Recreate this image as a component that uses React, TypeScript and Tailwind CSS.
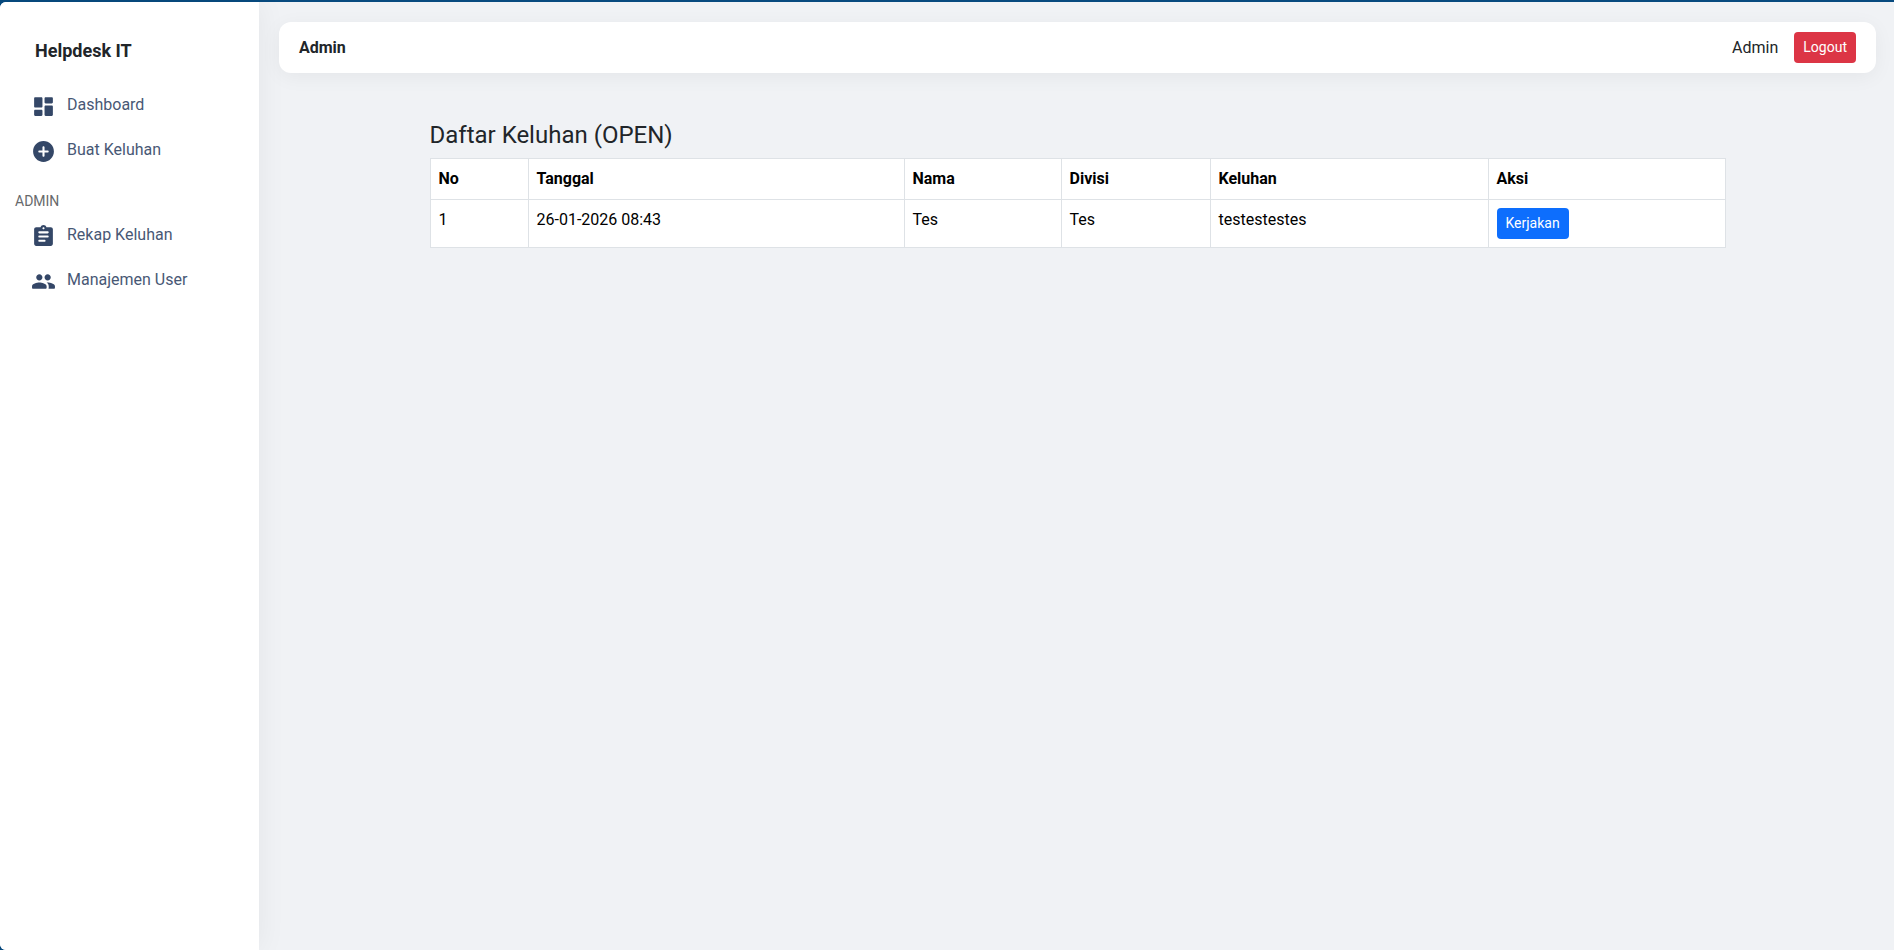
import React from 'react';

const icons = {
  dashboard:
    'M4 13h6c.55 0 1-.45 1-1V4c0-.55-.45-1-1-1H4c-.55 0-1 .45-1 1v8c0 .55.45 1 1 1zm0 8h6c.55 0 1-.45 1-1v-4c0-.55-.45-1-1-1H4c-.55 0-1 .45-1 1v4c0 .55.45 1 1 1zm10 0h6c.55 0 1-.45 1-1v-8c0-.55-.45-1-1-1h-6c-.55 0-1 .45-1 1v8c0 .55.45 1 1 1zM13 4v4c0 .55.45 1 1 1h6c.55 0 1-.45 1-1V4c0-.55-.45-1-1-1h-6c-.55 0-1 .45-1 1z',
  add:
    'M12 2C6.48 2 2 6.48 2 12s4.48 10 10 10 10-4.48 10-10S17.52 2 12 2zm4 11h-3v3c0 .55-.45 1-1 1s-1-.45-1-1v-3H8c-.55 0-1-.45-1-1s.45-1 1-1h3V8c0-.55.45-1 1-1s1 .45 1 1v3h3c.55 0 1 .45 1 1s-.45 1-1 1z',
  assignment:
    'M19 3h-4.18C14.4 1.84 13.3 1 12 1s-2.4.84-2.82 2H5c-1.1 0-2 .9-2 2v14c0 1.1.9 2 2 2h14c1.1 0 2-.9 2-2V5c0-1.1-.9-2-2-2zm-7 0c.55 0 1 .45 1 1s-.45 1-1 1-1-.45-1-1 .45-1 1-1zm1 14H8c-.55 0-1-.45-1-1s.45-1 1-1h5c.55 0 1 .45 1 1s-.45 1-1 1zm3-4H8c-.55 0-1-.45-1-1s.45-1 1-1h8c.55 0 1 .45 1 1s-.45 1-1 1zm0-4H8c-.55 0-1-.45-1-1s.45-1 1-1h8c.55 0 1 .45 1 1s-.45 1-1 1z',
  people:
    'M16 11c1.66 0 2.99-1.34 2.99-3S17.66 5 16 5s-3 1.34-3 3 1.34 3 3 3zm-8 0c1.66 0 2.99-1.34 2.99-3S9.66 5 8 5 5 6.34 5 8s1.34 3 3 3zm0 2c-2.33 0-7 1.17-7 3.5V18c0 .55.45 1 1 1h12c.55 0 1-.45 1-1v-1.5c0-2.33-4.67-3.5-7-3.5zm8 0c-.29 0-.62.02-.97.05 1.16.84 1.97 1.97 1.97 3.45V18c0 .35-.07.69-.18 1H22c.55 0 1-.45 1-1v-1.5c0-2.33-4.67-3.5-7-3.5z',
};

const NavItem = ({ icon, label }: { icon: keyof typeof icons; label: string }) => (
  <a href="#" className="flex items-center gap-[11px] h-[45px] px-[31px] text-[#344767]">
    <svg viewBox="0 0 24 24" fill="currentColor" className="size-[25px] shrink-0 mt-[3px]">
      <path d={icons[icon]} />
    </svg>
    <span className="opacity-90">{label}</span>
  </a>
);

const Sidebar = () => (
  <aside className="w-[259px] shrink-0 bg-white rounded-l-md shadow-[0_0_30px_rgba(0,0,0,0.06)]">
    <h1 className="px-[35px] pt-[37px] mb-[19px] text-lg leading-6 font-bold">Helpdesk IT</h1>
    <nav>
      <NavItem icon="dashboard" label="Dashboard" />
      <NavItem icon="add" label="Buat Keluhan" />
      <h2 className="px-[15px] pt-[18px] text-sm leading-[22px] text-[#67696c]">ADMIN</h2>
      <NavItem icon="assignment" label="Rekap Keluhan" />
      <NavItem icon="people" label="Manajemen User" />
    </nav>
  </aside>
);

const Header = () => (
  <header className="flex items-center justify-between px-5 py-[10px] bg-white rounded-xl shadow-[0_4px_20px_rgba(0,0,0,0.05)]">
    <strong className="font-bold">Admin</strong>
    <div className="flex items-center gap-4">
      <span>Admin</span>
      <button className="h-[31px] px-[9px] pb-[2px] rounded bg-[#dc3545] text-sm text-white">Logout</button>
    </div>
  </header>
);

const columns = [
  { label: 'No', width: 'w-[98px]' },
  { label: 'Tanggal', width: 'w-[376px]' },
  { label: 'Nama', width: 'w-[157px]' },
  { label: 'Divisi', width: 'w-[149px]' },
  { label: 'Keluhan', width: 'w-[278px]' },
  { label: 'Aksi', width: '' },
];

const complaints = [
  { tanggal: '26-01-2026 08:43', nama: 'Tes', divisi: 'Tes', keluhan: 'testestestes' },
];

const ComplaintTable = () => (
  <table className="w-full table-fixed border-collapse bg-white text-black text-left [&_td]:border [&_td]:border-[#dee2e6] [&_td]:p-2 [&_td]:align-top [&_th]:border [&_th]:border-[#dee2e6] [&_th]:p-2">
    <thead>
      <tr>
        {columns.map((col) => (
          <th key={col.label} className={col.width}>{col.label}</th>
        ))}
      </tr>
    </thead>
    <tbody>
      {complaints.map((row, index) => (
        <tr key={index}>
          <td>{index + 1}</td>
          <td>{row.tanggal}</td>
          <td>{row.nama}</td>
          <td>{row.divisi}</td>
          <td>{row.keluhan}</td>
          <td>
            <button className="block h-[31px] px-[9px] pb-[2px] rounded bg-[#0d6efd] text-sm text-white">Kerjakan</button>
          </td>
        </tr>
      ))}
    </tbody>
  </table>
);

const App = () => (
  <div className="min-h-screen flex bg-[#074a7f] pt-[2px] font-[Roboto,sans-serif] text-base text-[#212529]">
    <div className="flex flex-1 rounded-l-md bg-[#f0f2f5]">
      <Sidebar />
      <main className="flex-1 pl-5 pr-[18px] pt-5">
        <Header />
        <section className="max-w-[1320px] mx-auto px-3 pt-12">
          <h2 className="mb-2 text-2xl leading-[29px]">Daftar Keluhan (OPEN)</h2>
          <ComplaintTable />
        </section>
      </main>
    </div>
  </div>
);

export default App;
